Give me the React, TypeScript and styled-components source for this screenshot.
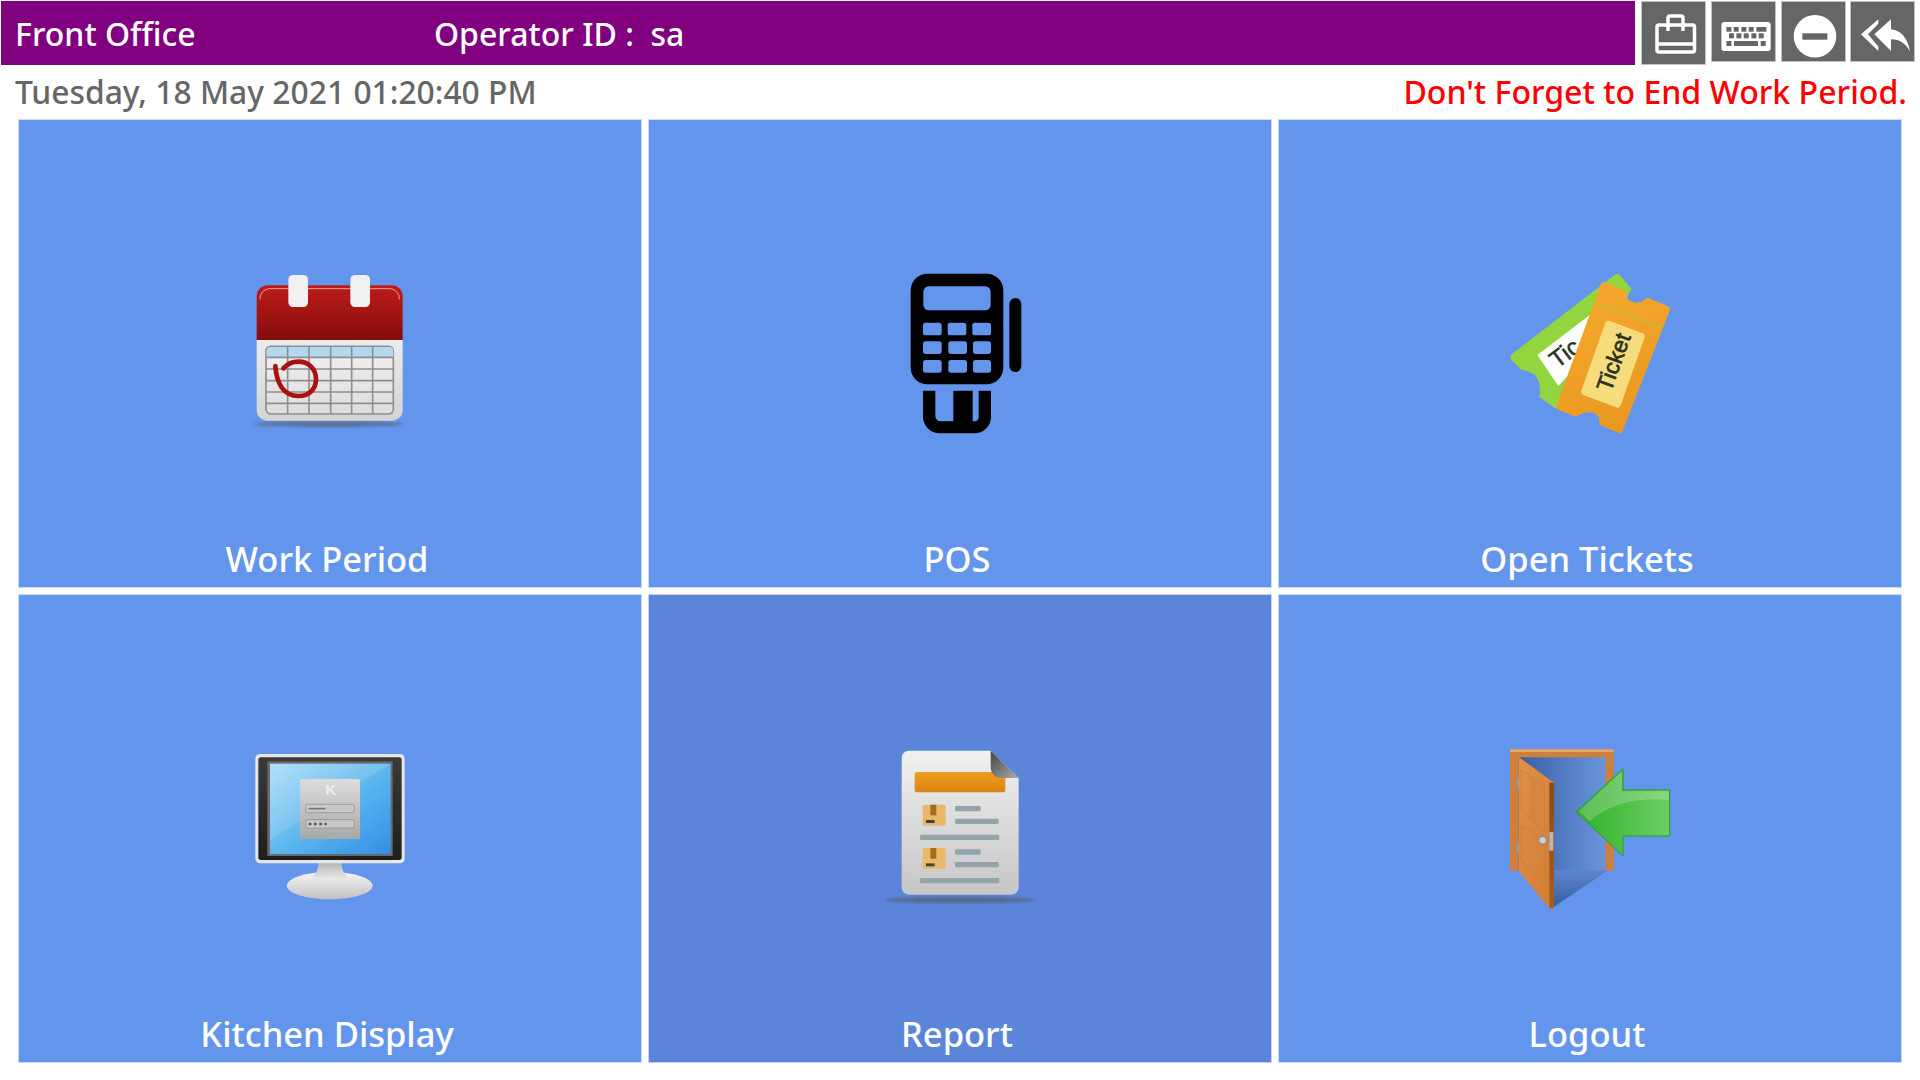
import React from "react";
import styled, { createGlobalStyle } from "styled-components";

const GlobalStyle = createGlobalStyle`
  html, body {
    margin: 0;
    padding: 0;
    background: #fff;
    font-family: "Noto Sans", "Open Sans", sans-serif;
  }
`;

const Page = styled.div`
  width: 1920px;
  height: 1080px;
  overflow: hidden;
  background: #fff;
`;

const TopRow = styled.div`
  display: flex;
  align-items: flex-start;
  padding: 1px 0 0 1px;
  height: 65px;
`;

const TitleBar = styled.div`
  width: 1634px;
  height: 64px;
  background: #800080;
  color: #fff;
  display: flex;
  align-items: center;
  font-size: 32px;
  font-weight: 500;
  flex-shrink: 0;
`;

const Title = styled.div`
  width: 433px;
  padding-left: 14px;
  box-sizing: border-box;
`;

const Operator = styled.div`
  white-space: pre;
`;

const IconButtons = styled.div`
  display: flex;
  gap: 5px;
  margin-left: 6px;
`;

const IconButton = styled.div<{ $tall?: boolean }>`
  width: 65px;
  height: ${({ $tall }) => ($tall ? 64 : 61)}px;
  background: #666;
  box-shadow: inset 0 0 0 1px #c2c2c2;

  &:last-child {
    margin-left: -1px;
  }
`;

const ButtonIcon = styled.svg`
  width: 65px;
  height: 64px;
  display: block;
`;

const StatusRow = styled.div`
  display: flex;
  justify-content: space-between;
  align-items: center;
  height: 50px;
  margin-bottom: 4px;
  padding: 0 13px 0 15px;
  font-size: 32px;
  font-weight: 500;
`;

const DateText = styled.div`
  color: #666;
  font-size: 31.8px;
`;

const Warning = styled.div`
  color: #f00;
  font-size: 32.1px;
`;

const Grid = styled.div`
  display: grid;
  grid-template-columns: repeat(3, 622px);
  grid-template-rows: repeat(2, 467px);
  column-gap: 8px;
  row-gap: 8px;
  padding-left: 19px;
`;

const Tile = styled.div<{ $active?: boolean }>`
  background: ${({ $active }) => ($active ? "#5b85d8" : "#6495ed")};
  outline: 1px solid ${({ $active }) => ($active ? "rgba(91, 133, 216, 0.35)" : "rgba(100, 149, 237, 0.35)")};
  display: flex;
  flex-direction: column;
  align-items: center;
  padding-top: 140px;
  box-sizing: border-box;
  color: #fff;
`;

const TileIcon = styled.svg`
  width: 200px;
  height: 180px;
  display: block;
`;

const TileLabel = styled.div`
  margin-top: auto;
  margin-bottom: 4px;
  padding-right: 6px;
  font-size: 34.5px;
  font-weight: 500;
  line-height: 48px;
`;

const CalendarIcon = () => (
  <TileIcon viewBox="0 0 600 540">
    <defs>
      <linearGradient id="calRed" x1="0" y1="0" x2="0" y2="1">
        <stop offset="0" stopColor="#bd1d1a" />
        <stop offset="1" stopColor="#850c0c" />
      </linearGradient>
      <linearGradient id="calBody" x1="0" y1="0" x2="0" y2="1">
        <stop offset="0" stopColor="#ececec" />
        <stop offset="1" stopColor="#d4d4d4" />
      </linearGradient>
      <linearGradient id="calGrid" x1="0" y1="0" x2="0" y2="1">
        <stop offset="0" stopColor="#f1f1f1" />
        <stop offset="1" stopColor="#dcdcdc" />
      </linearGradient>
      <filter id="calBlur"><feGaussianBlur stdDeviation="5" /></filter>
    </defs>
    <ellipse cx="296" cy="492" rx="226" ry="9" fill="#555" opacity="0.55" filter="url(#calBlur)" />
    <path d="M80 238h438v212a32 32 0 0 1-32 32H112a32 32 0 0 1-32-32z" fill="url(#calBody)" />
    <path d="M80 240V108a32 32 0 0 1 32-32h374a32 32 0 0 1 32 32v132z" fill="url(#calRed)" />
    <path d="M90 118a30 30 0 0 1 26-32h366a30 30 0 0 1 26 32" fill="none" stroke="#e8a09a" strokeWidth="3" />
    <rect x="108" y="259" width="382" height="203" rx="14" fill="url(#calGrid)" stroke="#8f8f8f" strokeWidth="5" />
    <path d="M110 291v-18a12 12 0 0 1 12-12h356a12 12 0 0 1 12 12v18z" fill="#b5d8f0" />
    <path d="M108 292h382M108 327h382M108 362h382M108 396h382M108 430h382M173 259v203M237 259v203M302 259v203M365 259v203M428 259v203" stroke="#8f8f8f" strokeWidth="5" fill="none" />
    <path d="M136 318C140 370 160 408 205 408C240 408 258 385 258 358C258 325 235 305 205 305C188 305 172 312 160 325" fill="none" stroke="#ab0f10" strokeWidth="14" strokeLinecap="round" />
    <rect x="175" y="45" width="59" height="96" rx="14" fill="#f0f0f0" />
    <rect x="361" y="45" width="59" height="96" rx="14" fill="#f0f0f0" />
  </TileIcon>
);

const PosIcon = () => (
  <TileIcon viewBox="-60 0 600 540">
    <path fillRule="evenodd" d="M150 41h170a50 50 0 0 1 50 50v232a50 50 0 0 1-50 50H142a50 50 0 0 1-50-50V91a50 50 0 0 1 50-50zM146 79a16 16 0 0 0-16 16v40a16 16 0 0 0 16 16h170a16 16 0 0 0 16-16V95a16 16 0 0 0-16-16zM137 188a8 8 0 0 0-8 8v22a8 8 0 0 0 8 8h40a8 8 0 0 0 8-8v-22a8 8 0 0 0-8-8zM211 188a8 8 0 0 0-8 8v22a8 8 0 0 0 8 8h40a8 8 0 0 0 8-8v-22a8 8 0 0 0-8-8zM285 188a8 8 0 0 0-8 8v22a8 8 0 0 0 8 8h40a8 8 0 0 0 8-8v-22a8 8 0 0 0-8-8zM137 244a8 8 0 0 0-8 8v22a8 8 0 0 0 8 8h40a8 8 0 0 0 8-8v-22a8 8 0 0 0-8-8zM213 244a8 8 0 0 0-8 8v22a8 8 0 0 0 8 8h40a8 8 0 0 0 8-8v-22a8 8 0 0 0-8-8zM287 244a8 8 0 0 0-8 8v22a8 8 0 0 0 8 8h38a8 8 0 0 0 8-8v-22a8 8 0 0 0-8-8zM137 300a8 8 0 0 0-8 8v22a8 8 0 0 0 8 8h40a8 8 0 0 0 8-8v-22a8 8 0 0 0-8-8zM213 300a8 8 0 0 0-8 8v22a8 8 0 0 0 8 8h40a8 8 0 0 0 8-8v-22a8 8 0 0 0-8-8zM287 300a8 8 0 0 0-8 8v22a8 8 0 0 0 8 8h38a8 8 0 0 0 8-8v-22a8 8 0 0 0-8-8z" fill="#000" />
    <rect x="388" y="114" width="36" height="222" rx="18" fill="#000" />
    <path d="M129 392h37v76a16 16 0 0 0 16 16h38v-92h58v92h5a14 14 0 0 0 13-14v-78h37v72a50 50 0 0 1-50 56H179a50 50 0 0 1-50-50z" fill="#000" />
  </TileIcon>
);

const TicketsIcon = () => (
  <TileIcon viewBox="-30 0 600 540">
    <defs>
      <linearGradient id="tkOrange" x1="0.2" y1="0" x2="0.6" y2="1">
        <stop offset="0" stopColor="#f6a92d" />
        <stop offset="1" stopColor="#ea9720" />
      </linearGradient>
    </defs>
    <path d="M345 44Q352 38 360 46L395 88L175 445L165 445L118 410Q125 370 105 345Q85 330 65 330L34 300Q28 290 36 282z" fill="#93d53f" />
    <path d="M280 157L112 285L175 378L280 265z" fill="#fff" />
    <text transform="translate(172 327) rotate(-37)" fontFamily="Liberation Sans, sans-serif" fontSize="72" stroke="#28321c" strokeWidth="1.5" fill="#28321c">Tic</text>
    <path d="M316 66l58 26c4 2 6 6 5 10-2 6 4 18 14 22 12 6 30 6 42-6 3-3 6-5 10-4l58 24c6 3 8 8 6 14L368 512c-2 6-8 8-14 6l-52-22c-4-2-4-6-4-10 2-10-4-20-14-26-14-6-36-4-48 6-4 3-8 5-12 3l-48-20c-6-2-8-8-6-14L302 74c2-6 8-10 14-8z" fill="url(#tkOrange)" />
    <path d="M298 130l182 72" stroke="#93d53f" strokeWidth="6" strokeDasharray="8 9" fill="none" />
    <path d="M330 183L428 220Q437 224 434 232L362 436Q358 446 348 442L250 405Q241 401 244 392L316 188Q320 180 330 183z" fill="#f6dc7c" />
    <text transform="translate(332 398) rotate(-70)" fontFamily="Liberation Sans, sans-serif" fontSize="68" stroke="#28321c" strokeWidth="2" fill="#28321c">Ticket</text>
  </TileIcon>
);

const MonitorIcon = () => (
  <TileIcon viewBox="-30 -15 600 540">
    <defs>
      <linearGradient id="monScreen" x1="0" y1="0" x2="1" y2="1">
        <stop offset="0" stopColor="#a8dcf8" />
        <stop offset="0.55" stopColor="#58b4ee" />
        <stop offset="1" stopColor="#348ee6" />
      </linearGradient>
      <linearGradient id="monPanel" x1="0" y1="0" x2="0" y2="1">
        <stop offset="0" stopColor="#dcdcdc" />
        <stop offset="1" stopColor="#a8a8a8" />
      </linearGradient>
      <linearGradient id="monBase" x1="0" y1="0" x2="0" y2="1">
        <stop offset="0" stopColor="#f6f6f6" />
        <stop offset="1" stopColor="#c0c0c0" />
      </linearGradient>
      <linearGradient id="monNeck" x1="0" y1="0" x2="0" y2="1">
        <stop offset="0" stopColor="#b4b4b4" />
        <stop offset="1" stopColor="#ececec" />
      </linearGradient>
      <linearGradient id="monBezel" x1="0" y1="0" x2="0" y2="1">
        <stop offset="0" stopColor="#3a3a3a" />
        <stop offset="1" stopColor="#1e1e1e" />
      </linearGradient>
    </defs>
    <ellipse cx="269" cy="437" rx="129" ry="41" fill="url(#monBase)" />
    <path d="M236 366h68q2 30 18 46c-34 12-70 12-104 0q16-16 18-46z" fill="url(#monNeck)" />
    <rect x="46" y="42" width="448" height="328" rx="14" fill="#e6e6e6" />
    <rect x="55" y="52" width="430" height="308" rx="8" fill="url(#monBezel)" />
    <rect x="82" y="64" width="376" height="284" fill="#6a6a6a" />
    <rect x="90" y="71" width="362" height="271" fill="url(#monScreen)" />
    <path d="M90 71h362L90 300z" fill="#fff" opacity="0.12" />
    <rect x="180" y="117" width="180" height="180" rx="5" fill="url(#monPanel)" />
    <text x="272" y="165" textAnchor="middle" fontFamily="Liberation Sans, sans-serif" fontWeight="700" fontSize="46" fill="#eee">K</text>
    <rect x="197" y="193" width="146" height="25" rx="5" fill="#c8c8c8" stroke="#8a8a8a" strokeWidth="2" />
    <rect x="197" y="239" width="146" height="25" rx="5" fill="#c8c8c8" stroke="#8a8a8a" strokeWidth="2" />
    <path d="M206 206h50" stroke="#777" strokeWidth="5" />
    <path d="M206 252h54" stroke="#555" strokeWidth="8" strokeDasharray="8 8" />
  </TileIcon>
);

const ReportIcon = () => (
  <TileIcon viewBox="-30 -15 600 540">
    <defs>
      <linearGradient id="repPage" x1="0" y1="0" x2="0" y2="1">
        <stop offset="0" stopColor="#f0f0f0" />
        <stop offset="1" stopColor="#c6c6c6" />
      </linearGradient>
      <linearGradient id="repBar" x1="0" y1="0" x2="0" y2="1">
        <stop offset="0" stopColor="#ee9c20" />
        <stop offset="1" stopColor="#da8512" />
      </linearGradient>
      <linearGradient id="repFold" x1="0" y1="0" x2="1" y2="1">
        <stop offset="0" stopColor="#444" />
        <stop offset="1" stopColor="#aaa" />
      </linearGradient>
      <filter id="repBlur"><feGaussianBlur stdDeviation="5" /></filter>
    </defs>
    <ellipse cx="270" cy="480" rx="226" ry="10" fill="#555" opacity="0.55" filter="url(#repBlur)" />
    <path d="M117 32h245l84 82v328a22 22 0 0 1-22 22H117a22 22 0 0 1-22-22V54a22 22 0 0 1 22-22z" fill="url(#repPage)" />
    <rect x="134" y="96" width="272" height="61" rx="8" fill="url(#repBar)" />
    <path d="M362 32l84 82h-50c-20 0-34-14-34-34z" fill="url(#repFold)" />
    <rect x="158" y="194" width="69" height="63" rx="5" fill="#eab869" />
    <rect x="181" y="194" width="18" height="32" fill="#a66c20" />
    <rect x="168" y="240" width="26" height="9" fill="#444" />
    <rect x="158" y="324" width="69" height="63" rx="5" fill="#eab869" />
    <rect x="181" y="324" width="18" height="32" fill="#a66c20" />
    <rect x="168" y="370" width="26" height="9" fill="#444" />
    <rect x="255" y="198" width="77" height="16" rx="4" fill="#92a4ac" />
    <rect x="255" y="236" width="131" height="16" rx="4" fill="#92a4ac" />
    <rect x="150" y="284" width="238" height="16" rx="4" fill="#92a4ac" />
    <rect x="255" y="328" width="77" height="16" rx="4" fill="#92a4ac" />
    <rect x="255" y="366" width="131" height="16" rx="4" fill="#92a4ac" />
    <rect x="150" y="414" width="238" height="16" rx="4" fill="#92a4ac" />
  </TileIcon>
);

const LogoutIcon = () => (
  <TileIcon viewBox="-30 -15 600 540">
    <defs>
      <linearGradient id="doorGap" x1="0" y1="0" x2="1" y2="0">
        <stop offset="0" stopColor="#3a5fa4" />
        <stop offset="1" stopColor="#6a95dc" />
      </linearGradient>
      <linearGradient id="doorWood" x1="0" y1="0" x2="1" y2="1">
        <stop offset="0" stopColor="#e09048" />
        <stop offset="1" stopColor="#d27c34" />
      </linearGradient>
      <linearGradient id="doorSide" x1="0" y1="0" x2="0" y2="1">
        <stop offset="0" stopColor="#8a4a18" />
        <stop offset="1" stopColor="#a65e22" />
      </linearGradient>
      <linearGradient id="doorFloor" x1="0" y1="0" x2="0" y2="1">
        <stop offset="0" stopColor="#5b85d0" />
        <stop offset="1" stopColor="#38609f" />
      </linearGradient>
      <linearGradient id="doorArrow" x1="0" y1="0" x2="1" y2="0">
        <stop offset="0" stopColor="#2fb02c" />
        <stop offset="1" stopColor="#6ecf62" />
      </linearGradient>
    </defs>
    <rect x="54" y="50" width="264" height="342" fill="url(#doorGap)" />
    <path d="M162 390h164L162 500z" fill="url(#doorFloor)" />
    <path d="M30 392V28h311v364h-24V52H54v340z" fill="#cf7f3c" />
    <path d="M30 28h311v8H30z" fill="#e6a468" />
    <path d="M55 50l107 78v377h-14L55 392z" fill="url(#doorWood)" />
    <path d="M148 128h14v377h-14z" fill="url(#doorSide)" />
    <path d="M64 90l32 22v124l-32-22zM104 118l30 20v132l-30-20zM64 256l70 46v120l-70-60z" fill="none" stroke="#d07f3a" strokeWidth="3" />
    <rect x="50" y="112" width="7" height="30" fill="#9a9a9a" />
    <rect x="50" y="308" width="7" height="30" fill="#9a9a9a" />
    <rect x="148" y="276" width="12" height="56" fill="#b8b8b8" />
    <circle cx="128" cy="301" r="12" fill="#ccc" stroke="#666" strokeWidth="2" />
    <path d="M229 216L369 86v64h140v138H369v60z" fill="url(#doorArrow)" stroke="#22a024" strokeWidth="3" />
    <path d="M236 214L366 94v60h140v26c-80-8-170 6-236 62z" fill="#fff" opacity="0.2" />
  </TileIcon>
);

const tiles = [
  { label: "Work Period", icon: <CalendarIcon /> },
  { label: "POS", icon: <PosIcon /> },
  { label: "Open Tickets", icon: <TicketsIcon /> },
  { label: "Kitchen Display", icon: <MonitorIcon /> },
  { label: "Report", icon: <ReportIcon />, active: true },
  { label: "Logout", icon: <LogoutIcon /> },
];

const App = () => {
  return (
    <Page>
      <GlobalStyle />
      <TopRow>
        <TitleBar>
          <Title>Front Office</Title>
          <Operator>{"Operator ID :  sa"}</Operator>
        </TitleBar>
        <IconButtons>
          <IconButton $tall>
            <ButtonIcon viewBox="0 0 65 64" fill="none" stroke="#fff" strokeWidth="3.5">
              <rect x="16" y="24" width="37.5" height="27" rx="2" />
              <path d="M27 30V17a2 2 0 0 1 2-2h11a2 2 0 0 1 2 2v13M16 43h38" />
            </ButtonIcon>
          </IconButton>
          <IconButton>
            <ButtonIcon viewBox="0 0 65 64">
              <rect x="10.4" y="21" width="49.3" height="29" rx="3" fill="#fff" />
              <g fill="#666">
                <rect x="15.4" y="26" width="5" height="4.7" />
                <rect x="22.7" y="26" width="5" height="4.7" />
                <rect x="30.4" y="26" width="5" height="4.7" />
                <rect x="37.7" y="26" width="5" height="4.7" />
                <rect x="45.4" y="26" width="10" height="4.7" />
                <rect x="18" y="32.3" width="5" height="5" />
                <rect x="25.4" y="32.3" width="5" height="5" />
                <rect x="32.7" y="32.3" width="5" height="5" />
                <rect x="40.4" y="32.3" width="5" height="5" />
                <rect x="47.7" y="32.3" width="5" height="5" />
                <rect x="15.4" y="40" width="5" height="5" />
                <rect x="23" y="40" width="24" height="5" />
                <rect x="49.7" y="40" width="5" height="5" />
              </g>
            </ButtonIcon>
          </IconButton>
          <IconButton>
            <ButtonIcon viewBox="0 0 65 64">
              <circle cx="34" cy="35.2" r="21.3" fill="#fff" />
              <rect x="21.4" y="32.3" width="25" height="6.4" fill="#666" />
            </ButtonIcon>
          </IconButton>
          <IconButton>
            <ButtonIcon viewBox="0 0 65 64" fill="#fff">
              <path d="M11 33.3L28.3 18.3v4.5L18 33.3L28.3 45.5V50z" />
              <path d="M24.3 33.3L41 18.3v10c10 1 17 9 19 22.4c-4-8-10-12.4-19-12.4V50z" />
            </ButtonIcon>
          </IconButton>
        </IconButtons>
      </TopRow>
      <StatusRow>
        <DateText>Tuesday, 18 May 2021 01:20:40 PM</DateText>
        <Warning>Don't Forget to End Work Period.</Warning>
      </StatusRow>
      <Grid>
        {tiles.map((tile) => (
          <Tile key={tile.label} $active={tile.active}>
            {tile.icon}
            <TileLabel>{tile.label}</TileLabel>
          </Tile>
        ))}
      </Grid>
    </Page>
  );
};

export default App;
